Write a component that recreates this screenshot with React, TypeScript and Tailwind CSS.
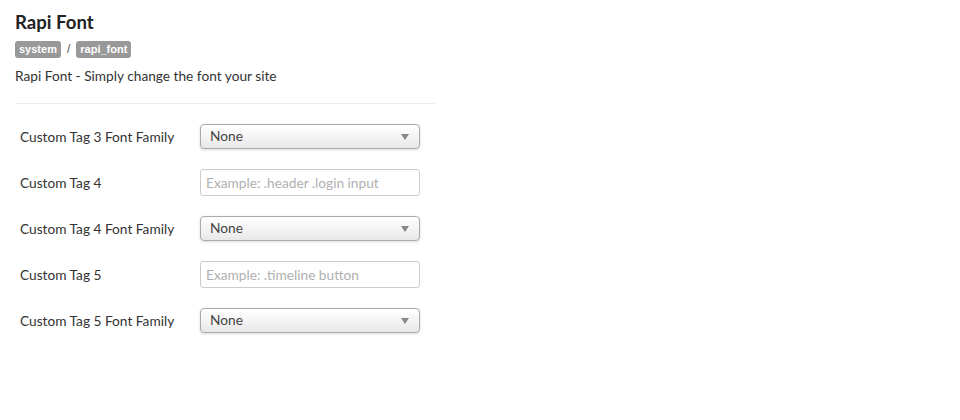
import React from 'react';

type Row = { label: string; kind: 'select' | 'input'; placeholder?: string };

const rows: Row[] = [
  { label: 'Custom Tag 3 Font Family', kind: 'select' },
  { label: 'Custom Tag 4', kind: 'input', placeholder: 'Example: .header .login input' },
  { label: 'Custom Tag 4 Font Family', kind: 'select' },
  { label: 'Custom Tag 5', kind: 'input', placeholder: 'Example: .timeline button' },
  { label: 'Custom Tag 5 Font Family', kind: 'select' },
];

const Select = () => (
  <div className="flex h-[25px] w-[220px] items-center justify-between rounded-[4px] border border-[#aaa] bg-gradient-to-b from-white via-[#f4f4f4] to-[#e8e8e8] pl-[9px] pr-[10px] pt-[1px] text-[13.7px] text-[#444] shadow-[0_1px_3px_rgba(0,0,0,0.15)]">
    <span>None</span>
    <svg width="8" height="6" viewBox="0 0 8 6">
      <path d="M0 0h8L4 6z" fill="#888" />
    </svg>
  </div>
);

const Input = ({ placeholder }: { placeholder?: string }) => (
  <input
    placeholder={placeholder}
    className="h-[27px] w-[220px] rounded-[3px] border border-[#ccc] bg-white px-[5px] pt-[1px] text-[13.7px] text-[#444] placeholder:text-[#b0b0b0] outline-none"
  />
);

export default function App() {
  return (
    <div className="min-h-[420px] bg-white px-[15px] pt-[11px] text-[#333] font-['Lato','Open_Sans',sans-serif]">
      <h1 className="text-[18.6px] font-bold leading-[22px] text-[#222]">Rapi Font</h1>
      <div className="mt-[7px] flex items-center gap-[6px] font-['Liberation_Sans',Arial,sans-serif]">
        <span className="rounded-[3px] bg-[#999] px-[4px] text-[11px] font-bold leading-[17px] text-white">system</span>
        <span className="text-[12px] text-[#555]">/</span>
        <span className="rounded-[3px] bg-[#999] px-[4px] text-[11px] font-bold leading-[17px] text-white">rapi_font</span>
      </div>
      <p className="mt-[9px] text-[13.7px] leading-[18px]">Rapi Font - Simply change the font your site</p>
      <div className="mt-[18px] w-[420px] border-t border-[#eee]" />
      <div className="mt-[19px] flex flex-col gap-[20px] pl-[5px]">
        {rows.map((r, i) => (
          <div key={i} className="flex h-[26px] items-center">
            <label className="w-[180px] pt-[3px] text-[13.7px] text-[#333]">{r.label}</label>
            {r.kind === 'select' ? <Select /> : <Input placeholder={r.placeholder} />}
          </div>
        ))}
      </div>
    </div>
  );
}
